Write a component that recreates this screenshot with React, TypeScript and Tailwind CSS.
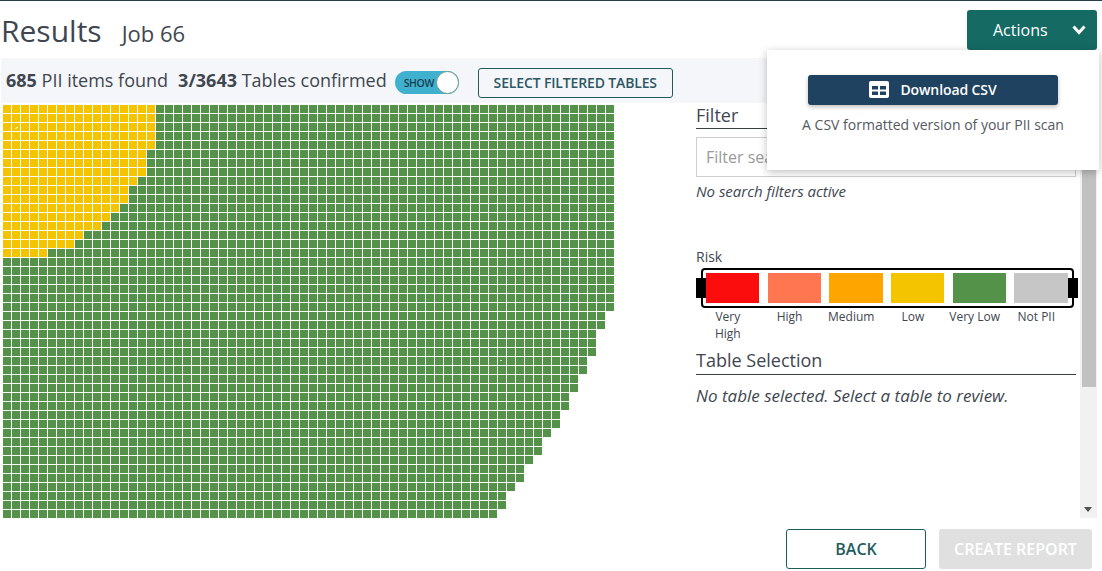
import React from "react";

const ROW_COUNTS: number[] = [
  ...Array(23).fill(68), 67, 67, 66, 66, 66, 65, 65, 64, 64, 63, 63, 62, 62, 61, 60, 60, 59, 58, 58, 57, 56, 56, 55,
];
const YELLOW: number[] = [17, 17, 17, 17, 17, 16, 16, 16, 15, 14, 14, 13, 12, 11, 9, 8, 5];

function Waffle() {
  const rects: React.ReactNode[] = [];
  ROW_COUNTS.forEach((n, r) => {
    for (let c = 0; c < n; c++) {
      const y = YELLOW[r] ?? 0;
      rects.push(
        <rect key={`${r}-${c}`} x={c * 9} y={r * 9} width={8} height={8} fill={c < y ? "#f5c400" : "#54924a"} />
      );
    }
  });
  return (
    <svg width={612} height={414} viewBox="0 0 612 414" shapeRendering="crispEdges" className="block">
      {rects}
      <rect x={13} y={22} width={2} height={1} fill="#fff2b0" />
      <rect x={12} y={23} width={2} height={1} fill="#fff2b0" />
      <rect x={497} y={255} width={2} height={1} fill="#cfe3ca" />
    </svg>
  );
}

const SWATCHES = [
  "h-[30px] w-[53px] bg-[#fb0d0d]",
  "ml-[9px] h-[30px] w-[53px] bg-[#ff7650]",
  "ml-[8px] h-[30px] w-[54px] bg-[#ffa500]",
  "ml-[8px] h-[30px] w-[53px] bg-[#f5c400]",
  "ml-[9px] h-[30px] w-[53px] bg-[#54924a]",
  "ml-[8px] h-[30px] w-[54px] bg-[#c6c6c6]",
];
const LABELS = ["Very High", "High", "Medium", "Low", "Very Low", "Not PII"];

export default function App() {
  return (
    <div className="relative w-[1102px] h-[571px] overflow-hidden bg-white text-[#40464f] font-['Open_Sans',sans-serif]">
      <div className="h-px bg-[#24404f]" />

      <header className="flex h-[57px] items-start">
        <h1 className="ml-[1px] mt-[8px] text-[30px] leading-[44px] font-normal">Results</h1>
        <span className="ml-[20px] mt-[15px] text-[22px] leading-[34px]">Job 66</span>
        <button className="ml-auto mr-[5px] mt-[9px] flex h-[40px] w-[130px] items-center rounded-[3px] bg-[#156a63] text-white">
          <span className="ml-[26px] text-[16px]">Actions</span>
          <svg className="ml-[24px]" width="14" height="10" viewBox="0 0 14 10" fill="none" stroke="white" strokeWidth="3">
            <path d="M1.5 1.5 7 7.5l5.5-6" />
          </svg>
        </button>
      </header>

      <div className="ml-[1px] mr-[20px] flex h-[45px] items-center bg-[#f4f6fa] pl-[5px] text-[18px] leading-[24px]">
        <span className="mt-[-1px]"><b className="font-bold">685</b> PII items found</span>
        <span className="ml-[10px] mt-[-1px]"><b className="font-bold">3/3643</b> Tables confirmed</span>
        <div className="ml-[8px] mt-[4px] flex h-[23px] w-[64px] items-center justify-between rounded-full bg-[#40b0cf] pl-[9px]">
          <span className="text-[10.5px] font-semibold tracking-[-0.4px] text-[#163f50]">SHOW</span>
          <span className="h-[23px] w-[23px] rounded-full border border-[#6f9a8c] bg-white" />
        </div>
        <button className="ml-[19px] mt-[5px] h-[30px] w-[195px] rounded-[3px] border border-[#1f5c5e] text-[14px] font-semibold tracking-[-0.15px] text-[#2f5763]">
          SELECT FILTERED TABLES
        </button>
      </div>

      <main className="mt-[2px] flex h-[414px]">
        <div className="ml-[3px]"><Waffle /></div>
        <section className="ml-[81px] w-[380px]">
          <div className="-mt-[1px] border-b border-[#3a3f45] pb-[2px] text-[18px] leading-[22px]">Filter</div>
          <div className="mt-[8px] flex h-[40px] items-center border border-[#cfcfcf] pl-[9px] text-[16px] text-[#9a9a9a]">
            Filter search
          </div>
          <p className="mt-[4px] text-[15px] italic leading-[20px]">No search filters active</p>
          <div className="mt-[47px] text-[14px] leading-[18px]">Risk</div>

          <div className="relative mt-[2px] ml-[5px] flex h-[40px] w-[373px] rounded-[4px] border-2 border-black pl-[3px] pt-[3px]">
            {SWATCHES.map((s) => (
              <div key={s} className={s} />
            ))}
            <div className="absolute left-[-7px] top-[8px] h-[20px] w-[10px] bg-black" />
            <div className="absolute right-[-6px] top-[8px] h-[20px] w-[10px] bg-black" />
          </div>

          <div className="ml-[1px] flex text-[12px] leading-[17px]">
            {LABELS.map((l) => (
              <div key={l} className="w-[61.7px] text-center first:px-[15px]">
                {l}
              </div>
            ))}
          </div>

          <div className="mt-[6px] border-b border-[#3a3f45] pb-[2px] text-[18px] leading-[24px]">Table Selection</div>
          <p className="mt-[9px] text-[17px] italic leading-[24px]">No table selected. Select a table to review.</p>
        </section>
        <div className="ml-[4px] mt-[-4px] flex h-[417px] w-[17px] flex-col bg-[#f1f1f1]">
          <div className="ml-[2px] h-[286px] w-[14px] bg-[#c1c1c1]" />
          <svg className="mt-auto mb-[6px] ml-[4px]" width="8" height="5" viewBox="0 0 8 5">
            <path d="M0 0h8L4 5z" fill="#505050" />
          </svg>
        </div>
      </main>

      <footer className="mt-[10px] flex justify-end gap-[13px] pr-[10px]">
        <button className="h-[40px] w-[140px] rounded-[3px] border border-[#1f5c5e] text-[16px] font-semibold text-[#1f5c5e]">
          BACK
        </button>
        <button className="h-[40px] w-[153px] rounded-[3px] bg-[#e0e0e0] text-[16px] font-semibold text-white">
          CREATE REPORT
        </button>
      </footer>

      <div className="absolute left-[767px] top-[50px] flex h-[120px] w-[332px] flex-col items-center bg-white pt-[25px] shadow-[0_2px_8px_rgba(0,0,0,0.25)]">
        <button className="flex h-[30px] w-[250px] items-center justify-center gap-[11px] rounded-[3px] bg-[#1f4260] pb-[2px] text-[14px] font-semibold tracking-[-0.1px] text-white shadow-[0_2px_4px_rgba(0,0,0,0.25)]">
          <svg width="20" height="17" viewBox="0 0 20 17">
            <path
              fillRule="evenodd"
              fill="white"
              d="M2 0h16a2 2 0 0 1 2 2v13a2 2 0 0 1-2 2H2a2 2 0 0 1-2-2V2a2 2 0 0 1 2-2zM3 5v3.5h6V5zm8 0v3.5h6V5zM3 10.5V14h6v-3.5zm8 0V14h6v-3.5z"
            />
          </svg>
          Download CSV
        </button>
        <p className="mt-[10px] text-[14px] leading-[20px] text-[#55595f]">A CSV formatted version of your PII scan</p>
      </div>
    </div>
  );
}
